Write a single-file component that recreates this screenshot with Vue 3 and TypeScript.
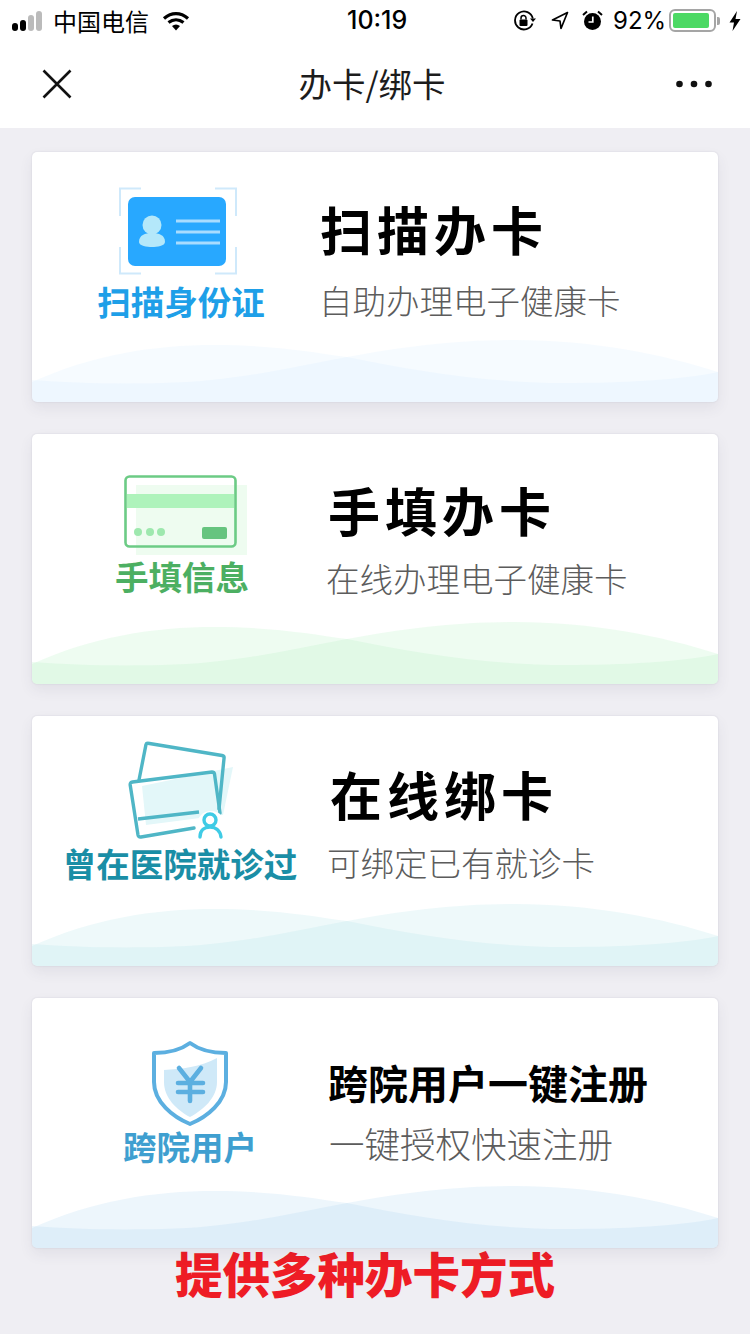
<script setup lang="ts">
interface CardItem {
  kind: string
  label: string
  title: string
  sub: string
}
const cards: CardItem[] = [
  { kind: 'scan', label: '扫描身份证', title: '扫描办卡', sub: '自助办理电子健康卡' },
  { kind: 'fill', label: '手填信息', title: '手填办卡', sub: '在线办理电子健康卡' },
  { kind: 'bind', label: '曾在医院就诊过', title: '在线绑卡', sub: '可绑定已有就诊卡' },
  { kind: 'cross', label: '跨院用户', title: '跨院用户一键注册', sub: '一键授权快速注册' },
]
</script>

<template>
  <div class="page">
    <header class="status">
      <div class="st-left">
        <div class="signal"><i class="b1"></i><i class="b2"></i><i class="b3"></i><i class="b4"></i></div>
        <span class="carrier">中国电信</span>
        <svg class="wifi" width="28" height="20" viewBox="0 0 28 20">
          <path d="M2 7.5C9.5 1 18.500 1 26 7.500" fill="none" stroke="#000" stroke-width="3.200" />
          <path d="M6.500 11.500C11 8 17 8 21.500 11.500" fill="none" stroke="#000" stroke-width="3.200" />
          <path d="M10 15C12.500 13 15.500 13 18 15L14 19.500Z" fill="#000" />
        </svg>
      </div>
      <div class="time">10:19</div>
      <div class="st-right">
        <svg width="24" height="22" viewBox="0 0 24 22">
          <path d="M19.500 13.500A9 9 0 1 1 19.800 8.500" fill="none" stroke="#000" stroke-width="1.800" />
          <path d="M17 8.500h6l-3 3.500z" fill="#000" />
          <rect x="6.500" y="9.500" width="8" height="6.500" rx="1" fill="#000" />
          <path d="M8 9.500V8a2.500 2.500 0 0 1 5 0v1.500" fill="none" stroke="#000" stroke-width="1.500" />
        </svg>
        <svg class="s-loc" width="18" height="19" viewBox="0 0 18 19">
          <path d="M16.500 1.500L1.500 9l7.500 1 1 7.500z" fill="none" stroke="#000" stroke-width="1.700" stroke-linejoin="round" />
        </svg>
        <svg class="s-alarm" width="21" height="21" viewBox="0 0 21 21">
          <circle cx="10.500" cy="11.500" r="8.500" fill="#000" />
          <path d="M10.800 6.500v5.500H6.500" fill="none" stroke="#fff" stroke-width="1.700" />
          <path d="M1 5L5 1.500M20 5L16 1.500" stroke="#000" stroke-width="2" />
        </svg>
        <span class="pct">92%</span>
        <div class="battery"><div class="level"></div></div>
        <i class="cap"></i>
        <svg class="bolt" width="12" height="20" viewBox="0 0 12 20">
          <path d="M8 0L0.500 11.500H5L3.500 20L11.500 8H6.500Z" fill="#000" />
        </svg>
      </div>
    </header>

    <nav class="nav">
      <svg class="close" width="30" height="30" viewBox="0 0 30 30">
        <path d="M1.500 1.500L28.500 28.500M28.500 1.500L1.500 28.500" stroke="#111" stroke-width="2.600" />
      </svg>
      <div class="nav-title">办卡/绑卡</div>
      <svg class="more" width="36" height="8" viewBox="0 0 36 8">
        <circle cx="3.500" cy="4" r="3.300" fill="#111" />
        <circle cx="18" cy="4" r="3.300" fill="#111" />
        <circle cx="32.500" cy="4" r="3.300" fill="#111" />
      </svg>
    </nav>

    <main class="list">
      <section v-for="c in cards" :key="c.kind" class="card" :class="c.kind">
        <svg class="wave" width="686" height="62" viewBox="0 0 686 62" preserveAspectRatio="none">
          <path class="w" d="M0 42C60 15 120 5 183 5C240 5 280 12 315 17C380 30 450 43 533 43C590 43 650 40 686 32V62H0Z" />
          <path class="w" d="M0 40C40 43 80 44 130 43C200 42 260 27 315 17C370 7 420 0 483 0C560 0 630 14 686 32V62H0Z" />
        </svg>

        <div class="left">
          <svg v-if="c.kind === 'scan'" class="icon" width="118" height="88" viewBox="0 0 118 88">
            <path d="M22 1.500H1V29M96 1.500H117V29M1 60V86.500H22M117 60V86.500H96" fill="none" stroke="#cfe9fb" stroke-width="2" />
            <rect x="9" y="10" width="98" height="69" rx="7" fill="#28a8ff" />
            <circle cx="33" cy="38" r="9.500" fill="#b4e8fa" />
            <path d="M20 55C20 48 26 46 33 46C40 46 46 48 46 55C46 59 38 60 33 60C28 60 20 59 20 55Z" fill="#b4e8fa" />
            <path d="M57 34H101M57 45H101M57 56H101" stroke="#a8dcff" stroke-width="3" />
          </svg>

          <svg v-else-if="c.kind === 'fill'" class="icon" width="124" height="82" viewBox="0 0 124 82">
            <rect x="12" y="10" width="111" height="70" fill="#eefcf0" />
            <rect x="1.500" y="1.500" width="110" height="70" rx="4" fill="none" stroke="#6ccb85" stroke-width="2.600" />
            <rect x="3" y="19" width="107" height="14" fill="#aef3bb" />
            <circle cx="14" cy="57" r="4" fill="#9ee8ae" />
            <circle cx="26" cy="57" r="4" fill="#9ee8ae" />
            <circle cx="37" cy="57" r="4" fill="#9ee8ae" />
            <rect x="78" y="52" width="25" height="12" rx="2" fill="#66c47f" />
          </svg>

          <svg v-else-if="c.kind === 'bind'" class="icon" width="112" height="98" viewBox="0 0 112 98">
            <path d="M16 45L107 26L97 74L20 84Z" fill="#e3f7f9" />
            <path d="M13 39L20 3.500Q20.500 2 22 2.300L96 14.500Q98.500 15 98 17.500L93 68" fill="none" stroke="#4fb6c6" stroke-width="3.400" stroke-linecap="round" />
            <path d="M68 87L15 96Q12.500 96.300 12 94L4.200 44Q4 41.500 6.500 41L86 31Q88 31 88.500 33L94 72" fill="none" stroke="#4fb6c6" stroke-width="3.400" stroke-linecap="round" />
            <path d="M12 78L73 71" stroke="#4fb6c6" stroke-width="3.400" />
            <circle cx="85" cy="84" r="14" fill="#fff" />
            <circle cx="84" cy="79" r="6" fill="none" stroke="#3fcbe5" stroke-width="3.400" />
            <path d="M74 96C74 89 79 86 84 86C89 86 94 89 95 96" fill="none" stroke="#3fcbe5" stroke-width="3.400" stroke-linecap="round" />
          </svg>

          <svg v-else class="icon" width="78" height="86" viewBox="0 0 78 86">
            <path d="M13 30C30 29 50 27 66 18V42C66 58 52 70 39 77C26 70 13 58 13 42Z" fill="#cfe9f8" />
            <path d="M39 3C47 9 60 13 75 13V42C75 62 56 77 39 84C22 77 3 62 3 42V13C18 13 31 9 39 3Z" fill="none" stroke="#5cafe0" stroke-width="4" stroke-linejoin="round" />
            <path d="M28 28L39 42L50 28M27 43H52M27 52H52M39 42V61" fill="none" stroke="#5cafe0" stroke-width="4.600" stroke-linecap="round" stroke-linejoin="round" />
          </svg>
          <div class="label">{{ c.label }}</div>
        </div>

        <div class="right">
          <div class="title">{{ c.title }}</div>
          <div class="sub">{{ c.sub }}</div>
        </div>
      </section>
    </main>

    <div class="slogan">提供多种办卡方式</div>
  </div>
</template>

<style>
html, body { margin: 0; background: #efeef3; }
</style>

<style scoped>
.page {
  width: 750px;
  height: 1334px;
  overflow: hidden;
  background: #efeef3;
  font-family: "Noto Sans CJK SC", "Noto Sans", sans-serif;
}
.status {
  box-sizing: border-box;
  height: 40px;
  padding-top: 1px;
  background: #fff;
  display: grid;
  grid-template-columns: 347px auto 1fr;
  align-items: center;
  color: #000;
}
.st-left { display: flex; align-items: center; padding-left: 12px; }
.signal { display: flex; align-items: flex-end; gap: 2px; height: 20px; }
.signal i { display: block; width: 6px; border-radius: 3px; background: #bbb; }
.signal .b1 { height: 8px; background: #000; }
.signal .b2 { height: 11px; background: #000; }
.signal .b3 { height: 16px; }
.signal .b4 { height: 20px; }
.carrier { font-size: 24px; line-height: 39px; margin-left: 11px; }
.wifi { margin-left: 13px; }
.time { font-family: Inter, Roboto, sans-serif; font-size: 25px; font-weight: 500; line-height: 39px; }
.st-right { display: flex; align-items: center; justify-content: flex-end; padding-right: 9px; }
.s-loc { margin-left: 14px; }
.s-alarm { margin-left: 13px; }
.pct { font-family: Inter, Roboto, sans-serif; font-size: 24px; margin-left: 10px; width: 49px; line-height: 39px; white-space: nowrap; }
.battery {
  box-sizing: border-box;
  width: 47px;
  height: 23px;
  margin-left: 7px;
  border: 2px solid #a5a5a5;
  border-radius: 6px;
  padding: 2px;
}
.level { height: 100%; width: 93%; border-radius: 2px; background: #4cd964; }
.cap { display: block; width: 3px; height: 8px; margin-left: 1px; background: #a5a5a5; border-radius: 0 2px 2px 0; }
.bolt { margin-left: 9px; }

.nav {
  box-sizing: border-box;
  height: 88px;
  background: #fff;
  display: grid;
  grid-template-columns: 150px 1fr 150px;
  align-items: center;
  padding: 0 6px 0 0;
}
.close { margin-left: 42px; }
.nav-title { text-align: center; font-size: 33.500px; line-height: 86px; font-weight: 400; color: #1c1c1c; padding-bottom: 2px; }
.more { justify-self: end; margin-right: 32px; }

.list {
  display: flex;
  flex-direction: column;
  gap: 32px;
  padding: 24px 32px 0;
}
.card {
  position: relative;
  box-sizing: border-box;
  height: 250px;
  background: #fff;
  border-radius: 5px;
  display: flex;
  align-items: flex-start;
  padding-left: var(--pl);
  box-shadow: 0 6px 14px rgba(60, 60, 90, 0.08), 0 0 2px rgba(60, 60, 90, 0.14);
}
.wave { position: absolute; left: 0; bottom: 0; border-radius: 0 0 5px 5px; }
.w { fill: var(--wave); }
.left {
  position: relative;
  width: 260px;
  flex: none;
  display: flex;
  flex-direction: column;
  align-items: center;
  padding-top: var(--it);
}
.icon { display: block; margin-left: var(--ix); }
.label {
  margin-top: var(--ig);
  font-size: 33.500px;
  line-height: 36px;
  font-weight: 600;
  white-space: nowrap;
  color: var(--lc);
}
.right {
  position: relative;
  margin-left: var(--rm);
  padding-top: var(--tt);
}
.title {
  font-size: 52px;
  line-height: 60px;
  font-weight: 700;
  letter-spacing: 5px;
  color: #000;
  white-space: nowrap;
}
.sub {
  margin-top: var(--tg);
  margin-left: var(--sx);
  font-size: 33.500px;
  line-height: 44px;
  font-weight: 300;
  color: #5c5c5c;
  white-space: nowrap;
}
.scan { --pl: 19px; --rm: 9px; --sx: -1px; --ix: -6px; --it: 35px; --ig: 8px; --tt: 47px; --tg: 19px; --lc: #1e9fe8; --wave: rgba(200, 230, 255, 0.16); }
.fill { --pl: 20px; --rm: 16px; --sx: -2px; --ix: 8px; --it: 41px; --ig: 1px; --tt: 46px; --tg: 16px; --lc: #4caf62; --wave: rgba(180, 240, 195, 0.226); }
.bind { --pl: 18px; --rm: 20px; --sx: -3px; --ix: 4px; --it: 25px; --ig: 6px; --tt: 48px; --tg: 16px; --lc: #1a8ea6; --wave: rgba(170, 224, 232, 0.2); }
.cross { --pl: 28px; --rm: 8px; --sx: 1px; --ix: 0px; --it: 42px; --ig: 2px; --tt: 54px; --tg: 9px; --lc: #3f9fd0; --wave: rgba(165, 210, 240, 0.2); }
.cross .title { font-size: 40px; font-weight: 600; letter-spacing: 0; }
.cross .sub { font-size: 35.500px; }
.slogan {
  margin-top: -3px;
  padding-right: 20px;
  text-align: center;
  font-size: 47.500px;
  line-height: 56px;
  font-weight: 900;
  color: #ee1c25;
  white-space: nowrap;
}
</style>
